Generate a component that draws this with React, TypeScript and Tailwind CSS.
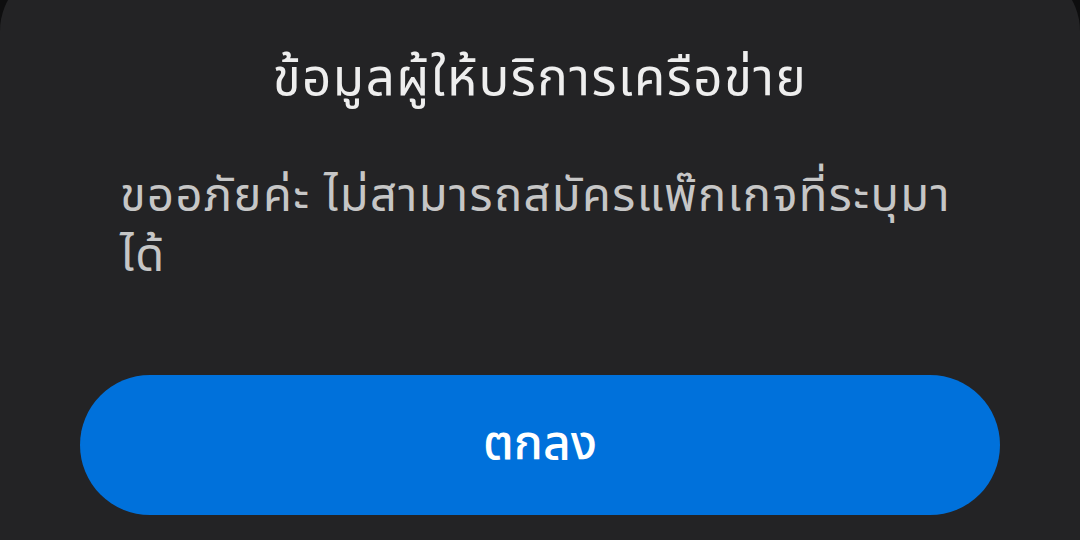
export default function App() {
  return (
    <div className="w-[1080px] h-[540px] overflow-hidden bg-[#0e0e0f]">
      <div
        className="-mt-[33px] w-[1080px] h-[620px] rounded-t-[64px] bg-[#232325] px-[80px] pt-[81px]"
        style={{ fontFamily: '"Noto Sans Thai", "Noto Sans", "Liberation Sans", sans-serif' }}
      >
        <h1 className="text-center text-[51px] leading-[64px] tracking-[1.5px] text-[#eeeeee]">
          ข้อมูลผู้ให้บริการเครือข่าย
        </h1>
        <p className="mt-[55px] pl-[40px] pr-[40px] text-[47px] leading-[60px] tracking-[1.4px] text-[#c6c6c6]">
          ขออภัยค่ะ ไม่สามารถสมัครแพ๊กเกจที่ระบุมาได้
        </p>
        <button className="mt-[88px] w-[920px] h-[140px] rounded-full bg-[#0071db] text-[48px] font-medium text-white">
          ตกลง
        </button>
      </div>
    </div>
  );
}
